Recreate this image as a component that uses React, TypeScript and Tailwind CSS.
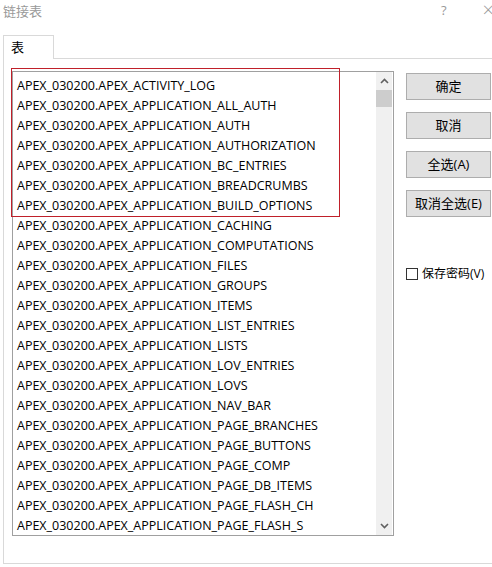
import React from "react";

const items = [
  "APEX_ACTIVITY_LOG",
  "APEX_APPLICATION_ALL_AUTH",
  "APEX_APPLICATION_AUTH",
  "APEX_APPLICATION_AUTHORIZATION",
  "APEX_APPLICATION_BC_ENTRIES",
  "APEX_APPLICATION_BREADCRUMBS",
  "APEX_APPLICATION_BUILD_OPTIONS",
  "APEX_APPLICATION_CACHING",
  "APEX_APPLICATION_COMPUTATIONS",
  "APEX_APPLICATION_FILES",
  "APEX_APPLICATION_GROUPS",
  "APEX_APPLICATION_ITEMS",
  "APEX_APPLICATION_LIST_ENTRIES",
  "APEX_APPLICATION_LISTS",
  "APEX_APPLICATION_LOV_ENTRIES",
  "APEX_APPLICATION_LOVS",
  "APEX_APPLICATION_NAV_BAR",
  "APEX_APPLICATION_PAGE_BRANCHES",
  "APEX_APPLICATION_PAGE_BUTTONS",
  "APEX_APPLICATION_PAGE_COMP",
  "APEX_APPLICATION_PAGE_DB_ITEMS",
  "APEX_APPLICATION_PAGE_FLASH_CH",
  "APEX_APPLICATION_PAGE_FLASH_S",
];

const font = { fontFamily: '"Open Sans", "Noto Sans CJK SC", sans-serif' };

function Btn({ label }: { label: string }) {
  return (
    <button className="w-[85px] h-[27px] bg-[#e1e1e1] border border-[#adadad] text-[13px] text-black flex items-center justify-center">
      {label}
    </button>
  );
}

export default function App() {
  return (
    <div
      className="w-[492px] h-[567px] bg-white overflow-hidden relative text-black"
      style={font}
    >
      {/* title bar */}
      <div className="h-[35px] flex items-start justify-between">
        <span className="ml-[3px] mt-[2px] text-[13px] text-[#999999] leading-[18px]">链接表</span>
        <div className="flex items-start">
          <span className="mt-[1px] text-[13px] text-[#999999] leading-[18px] mr-[36px]">?</span>
          <span className="text-[20px] text-[#999999] leading-[20px] mr-[-2px] font-light">×</span>
        </div>
      </div>

      {/* tab header */}
      <div className="ml-[3px] flex">
        <div className="w-[51px] h-[24px] border border-b-0 border-[#d9d9d9] bg-white flex items-center pl-[7px] text-[13px] relative z-10 mb-[-1px]">
          表
        </div>
      </div>

      {/* tab panel */}
      <div className="ml-[3px] h-[506px] border-l border-t border-b border-[#d9d9d9] flex relative">
        {/* list box */}
        <div className="ml-[8px] mt-[12px] w-[382px] h-[465px] border border-[#a0a0a0] flex relative">
          <div className="flex-1 pt-[4px] pl-[4px] overflow-hidden">
            {items.map((it) => (
              <div key={it} className="h-[20px] leading-[20px] text-[12.5px] whitespace-nowrap">
                APEX_030200.{it}
              </div>
            ))}
          </div>
          {/* scrollbar */}
          <div className="w-[16px] bg-[#f0f0f0] flex flex-col items-center mr-[1px]">
            <div className="h-[18px] flex items-center justify-center">
              <svg width="9" height="6" viewBox="0 0 9 6">
                <path d="M1 5 L4.5 1.5 L8 5" stroke="#606060" strokeWidth="1.6" fill="none" />
              </svg>
            </div>
            <div className="w-[16px] h-[17px] bg-[#cdcdcd]" />
            <div className="flex-1" />
            <div className="h-[18px] flex items-center justify-center">
              <svg width="9" height="6" viewBox="0 0 9 6">
                <path d="M1 1 L4.5 4.5 L8 1" stroke="#606060" strokeWidth="1.6" fill="none" />
              </svg>
            </div>
          </div>
          {/* red highlight */}
          <div className="absolute left-[-2px] top-[-4px] w-[329px] h-[149px] border border-[#c0202a] pointer-events-none" />
        </div>

        {/* buttons */}
        <div className="ml-[12px] mt-[14px] flex flex-col gap-[12px]">
          <Btn label="确定" />
          <Btn label="取消" />
          <Btn label="全选(A)" />
          <Btn label="取消全选(E)" />
          <div className="mt-[36px] flex items-center gap-[4px] text-[12px]">
            <div className="w-[12px] h-[12px] border border-[#333333] bg-white" />
            <span>保存密码(V)</span>
          </div>
        </div>
      </div>
    </div>
  );
}
